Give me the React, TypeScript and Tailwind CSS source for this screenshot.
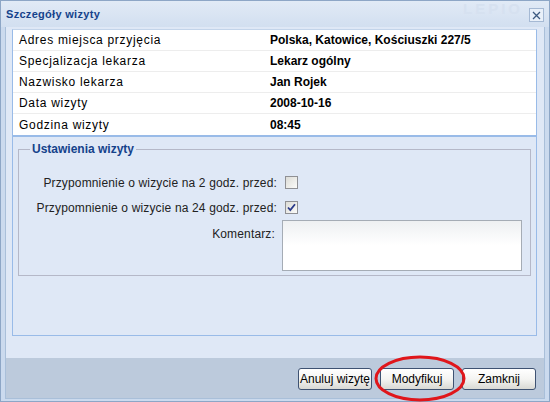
import React from "react";

const rows = [
  ["Adres miejsca przyjęcia", "Polska, Katowice, Kościuszki 227/5"],
  ["Specjalizacja lekarza", "Lekarz ogólny"],
  ["Nazwisko lekarza", "Jan Rojek"],
  ["Data wizyty", "2008-10-16"],
  ["Godzina wizyty", "08:45"],
];

function Checkbox({ checked }: { checked?: boolean }) {
  return (
    <div className="w-[13px] h-[13px] border border-[#8f9094] bg-gradient-to-br from-[#dcdcd7] to-[#fbfbf9] flex items-center justify-center">
      {checked && (
        <svg width="9" height="9" viewBox="0 0 9 9">
          <path d="M1 4.5 L3.3 7 L8 1.2" fill="none" stroke="#2a3a8a" strokeWidth="1.8" />
        </svg>
      )}
    </div>
  );
}

function Button({ label }: { label: string }) {
  return (
    <button className="h-[22px] w-[74px] rounded-[3px] border border-[#3e5272] bg-gradient-to-b from-white via-[#f4f4f2] to-[#d9d9d4] text-[12px] text-black leading-none">
      {label}
    </button>
  );
}

export default function App() {
  return (
    <div
      className="relative w-[550px] h-[402px] bg-[#cbdaee] border border-[#8da6c6] flex flex-col"
      style={{ fontFamily: '"Liberation Sans", Arial, sans-serif' }}
    >
      {/* title bar */}
      <div className="relative h-[26px] shrink-0 bg-gradient-to-b from-[#e1eaf6] to-[#d2dff0] flex items-center px-[5px]">
        <span className="text-[11px] font-bold text-[#15428b] tracking-[0.3px]">Szczegóły wizyty</span>
        <span className="absolute right-[26px] top-[0px] text-[15px] leading-none font-bold tracking-[3px] text-[#d6e1f0]">LEPIO</span>
        <div className="absolute right-[5px] top-[7px] w-[15px] h-[14px] border border-[#a5b9d4] bg-[#e9f0f9] flex items-center justify-center">
          <svg width="9" height="9" viewBox="0 0 9 9">
            <path d="M1 1 L8 8 M8 1 L1 8" stroke="#3d5a80" strokeWidth="1.3" />
          </svg>
        </div>
      </div>

      {/* body */}
      <div className="flex-1 mx-[4px] bg-[#dfe8f6] border-x border-[#a9bfd9] pl-[6px] pr-[7px] pt-[2px] flex flex-col">
        <div className="h-[307px] border border-[#99bbe8] border-t-[#c3d4ea] flex flex-col bg-[#dfe8f6]">
          <div className="bg-white border-b-2 border-[#99bbe8]">
            {rows.map(([k, v], i) => (
              <div
                key={k}
                className={`h-[21px] flex items-center text-black ${i < rows.length - 1 ? "border-b border-[#ededed]" : ""}`}
              >
                <span className="w-[257px] pl-[6px] text-[12px] tracking-[0.7px]">{k}</span>
                <span className="font-bold text-[12px]">{v}</span>
              </div>
            ))}
          </div>

          <fieldset className="mx-[5px] mt-[3px] h-[136px] border border-[#b5b8c8] pl-[10px] pr-[6px]">
            <legend className="text-[12px] font-bold text-[#15428b] px-[2px] ml-[1px]">Ustawienia wizyty</legend>
            <div className="flex flex-col text-[12px] text-[#222] tracking-[0.15px] mt-[12px]">
              <div className="flex items-center h-[25px]">
                <span className="w-[256px] text-right pr-[8px]">Przypomnienie o wizycie na 2 godz. przed:</span>
                <Checkbox />
              </div>
              <div className="flex items-center h-[25px]">
                <span className="w-[256px] text-right pr-[8px]">Przypomnienie o wizycie na 24 godz. przed:</span>
                <Checkbox checked />
              </div>
              <div className="flex items-start">
                <span className="w-[253px] text-right pr-[7px] pt-[5px]">Komentarz:</span>
                <div className="w-[240px] h-[51px] border border-[#a5acb5] bg-gradient-to-b from-[#eef0f2] via-white to-white" />
              </div>
            </div>
          </fieldset>
        </div>
      </div>

      {/* footer */}
      <div className="h-[41px] shrink-0 mx-[4px] bg-[#bccadc] border-x border-b border-[#a9bfd9] flex items-center justify-end gap-[8px] pr-[8px] pt-[1px]">
        <Button label="Anuluj wizytę" />
        <Button label="Modyfikuj" />
        <Button label="Zamknij" />
      </div>
      <div className="h-[2px] shrink-0" />

      <svg className="absolute left-[373px] top-[354px] pointer-events-none" width="92" height="47" viewBox="0 0 92 47">
        <ellipse cx="46" cy="23.5" rx="44" ry="21.5" fill="none" stroke="#e0161b" strokeWidth="3" />
      </svg>
    </div>
  );
}
